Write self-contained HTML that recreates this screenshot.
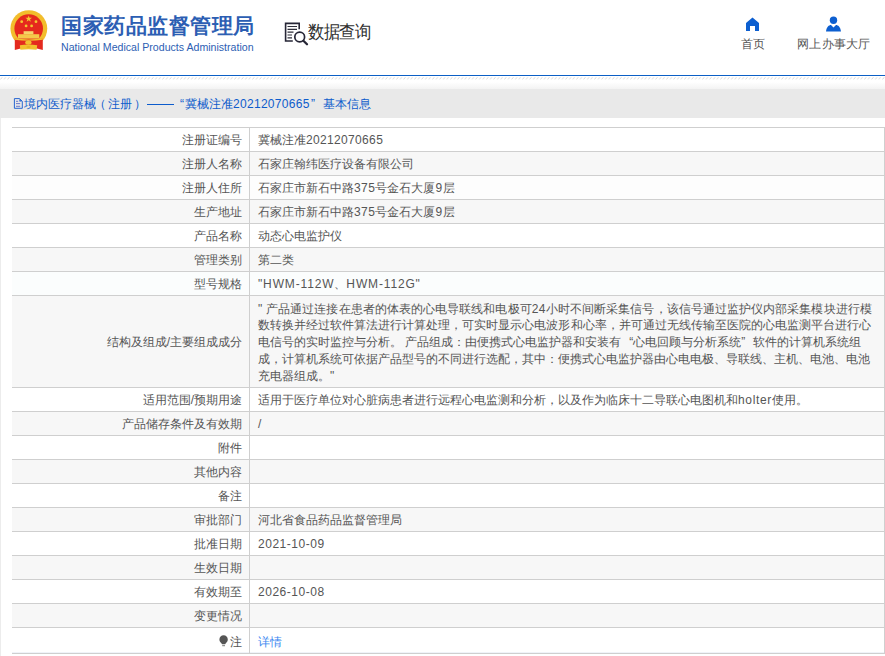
<!DOCTYPE html>
<html><head><meta charset="utf-8">
<style>
*{margin:0;padding:0;box-sizing:border-box}
html,body{width:885px;height:656px;overflow:hidden;background:#fff}
body{position:relative;font-family:"Liberation Sans",sans-serif;color:#555}
.abs{position:absolute;white-space:nowrap}
.title{left:61px;top:13px;font-size:21px;letter-spacing:0.55px;font-weight:bold;color:#2c5eb3;line-height:26px}
.sub{left:61px;top:40.7px;font-size:10.6px;color:#2c5eb3;line-height:13px}
.query{left:308px;top:19.6px;font-size:16.5px;letter-spacing:-1.3px;color:#2e2e2e;line-height:20px;transform:scaleY(1.1);transform-origin:0 0}
.navtxt{font-size:12.4px;letter-spacing:0.25px;color:#555;line-height:14px;top:37.4px}
.blue{left:0;top:75px;width:885px;height:1px;background:#0c5fc5}
.hatch{left:0;top:77px;width:885px;height:3px}
.grad{left:0;top:82px;width:885px;height:7px;background:linear-gradient(#fff,#f3f3f3)}
.bar{left:0;top:89px;width:885px;height:29px;background:#e9e9e9}
.bartxt{top:96px;font-size:12px;color:#0d5ccc;line-height:16px}
.leftline{left:0;top:118px;width:1px;height:538px;background:#ececec}
.row{position:absolute;left:12px;width:873px}
.hl{position:absolute;left:12px;width:873px;height:1px;background:#cfcfcf}
.vl{position:absolute;width:1px;background:#cfcfcf}
.lab{position:absolute;left:12px;width:230px;text-align:right;font-size:12px;line-height:24px;height:24px;white-space:nowrap;color:#555}
.val{position:absolute;left:258px;font-size:12px;line-height:24px;height:24px;white-space:nowrap;color:#555}
.link{color:#3a87f0}
.pin{vertical-align:-1px;margin-right:1px}
.ql,.qr{display:inline-block;width:12px}
.ql{text-align:right}
.qr{text-align:left}
.fw{display:inline-block;width:12px}
</style></head><body>
<svg class="abs" style="left:0;top:0" width="60" height="56" viewBox="0 0 60 56">
 <circle cx="28.85" cy="28.6" r="18.4" fill="#f2bd2c"/>
 <circle cx="28.7" cy="28.6" r="14.3" fill="#e5291d"/>
 <rect x="23.6" y="31.2" width="9.8" height="3.2" fill="#f6d46a"/>
 <rect x="18" y="34.2" width="21.3" height="4.4" fill="#f4c94a"/>
 <path d="M14.8 38.8 Q28.8 40.4 42.8 38.8 L42.8 50 L37 48.6 L20.6 48.6 L14.8 50 Z" fill="#e42a1e"/>
 <path d="M14.8 38.6 Q28.8 40.2 42.8 38.6 L42.8 39.8 Q28.8 41.6 14.8 39.8 Z" fill="#f2c02e"/>
 <ellipse cx="28.4" cy="42.6" rx="3.2" ry="2.2" fill="#f2c02e"/>
 <path d="M19.8 45.3 Q28.5 43.6 37.2 45.3 L36.6 49.8 Q28.5 48.6 20.4 49.8 Z" fill="#f2c02e"/>
 <ellipse cx="28.5" cy="47" rx="2.2" ry="1" fill="#e8b020"/>
 <polygon points="28.7,15.4 29.5,17.8 32,17.8 30,19.3 30.8,21.7 28.7,20.2 26.6,21.7 27.4,19.3 25.4,17.8 27.9,17.8" fill="#f4c630"/>
 <circle cx="21.7" cy="21.7" r="1.4" fill="#f4c630"/>
 <circle cx="36" cy="21.7" r="1.4" fill="#f4c630"/>
 <circle cx="26.1" cy="25.9" r="1.4" fill="#f4c630"/>
 <circle cx="31.6" cy="25.9" r="1.4" fill="#f4c630"/>
</svg>
<div class="abs title">国家药品监督管理局</div>
<div class="abs sub">National Medical Products Administration</div>
<svg class="abs" style="left:284px;top:22px" width="26" height="24" viewBox="0 0 26 24">
 <path d="M15.2 7.2 V1.4 H1.6 V19 H8.8" fill="none" stroke="#262636" stroke-width="1.6"/>
 <path d="M3.5 4.5h9.5M3.5 7.3h9.5M3.5 10.2h6M3.5 13h4.5M3.5 15.8h4.5" stroke="#2e2e3a" stroke-width="1.2"/>
 <circle cx="15.7" cy="15" r="4.9" fill="#fff" stroke="#262636" stroke-width="1.7"/>
 <path d="M19.4 18.8 L23 22.3" stroke="#262636" stroke-width="2.3" stroke-linecap="round"/>
</svg>
<div class="abs query">数据查询</div>
<svg class="abs" style="left:745px;top:17px" width="15" height="15" viewBox="0 0 15 15">
 <path d="M7.5 0.5 L14 6 V14 H10 V9 H5 V14 H1 V6 Z" fill="#0d5fd0"/>
</svg>
<div class="abs navtxt" style="left:740.8px">首页</div>
<svg class="abs" style="left:825px;top:16px" width="17" height="17" viewBox="0 0 17 17">
 <circle cx="8.5" cy="4.3" r="3.7" fill="#0d5fd0"/>
 <path d="M1 15.5 C1.5 11 4 9 6 9 L8.5 11.5 L11 9 C13 9 15.5 11 16 15.5 Z" fill="#0d5fd0"/>
</svg>
<div class="abs navtxt" style="left:797px">网上办事大厅</div>
<div class="abs blue"></div>
<svg class="abs hatch" width="885" height="3"><defs><pattern id="hp" width="3.6" height="3" patternUnits="userSpaceOnUse"><path d="M0.4 2.2 L2.3 0.3" stroke="#cdcdcd" stroke-width="0.9"/></pattern></defs><rect width="885" height="3" fill="url(#hp)"/></svg>
<div class="abs grad"></div>
<div class="abs bar"></div>
<svg class="abs" style="left:8px;top:94px" width="16" height="18" viewBox="8 94 16 18">
 <path d="M14.4 98.6 H19.6 L22.3 101.3 V108.3 H14.4 Z" fill="none" stroke="#1c5fd0" stroke-width="0.95"/>
 <path d="M19.4 98.9 V101.5 H22 Z" fill="#1c5fd0"/>
 <path d="M16 101.3h2.2M16 103.6h4.2M16 106.3h4.2" stroke="#5a6cc8" stroke-width="0.9"/>
</svg>
<div class="abs bartxt" style="left:23.8px">境内医疗器械</div>
<div class="abs bartxt" style="left:93.6px">（</div>
<div class="abs bartxt" style="left:107.5px;letter-spacing:0.3px">注册</div>
<div class="abs bartxt" style="left:134.3px">）</div>
<div class="abs" style="left:147px;top:104px;width:27px;height:1.4px;background:#0d5ccc"></div>
<div class="abs bartxt" style="left:180px">“</div>
<div class="abs bartxt" style="left:185px">冀械注准<span style="letter-spacing:0.3px">20212070665</span></div>
<div class="abs bartxt" style="left:311px">”</div>
<div class="abs bartxt" style="left:322.8px">基本信息</div>
<div class="abs leftline"></div>
<div class="row" style="top:127px;height:24px;background:#fff"></div>
<div class="hl" style="top:127px"></div>
<div class="lab" style="top:128.0px">注册证编号</div>
<div class="val" style="top:128.0px">冀械注准<span style="letter-spacing:0.34px">20212070665</span></div>
<div class="row" style="top:151px;height:24px;background:#f7f7f7"></div>
<div class="hl" style="top:151px"></div>
<div class="lab" style="top:152.0px">注册人名称</div>
<div class="val" style="top:152.0px">石家庄翰纬医疗设备有限公司</div>
<div class="row" style="top:175px;height:24px;background:#fdfdfd"></div>
<div class="hl" style="top:175px"></div>
<div class="lab" style="top:176.0px">注册人住所</div>
<div class="val" style="top:176.0px">石家庄市新石中路<span style="letter-spacing:0.45px">375</span>号金石大厦<span style="letter-spacing:0.45px">9</span>层</div>
<div class="row" style="top:199px;height:24px;background:#f7f7f7"></div>
<div class="hl" style="top:199px"></div>
<div class="lab" style="top:200.0px">生产地址</div>
<div class="val" style="top:200.0px">石家庄市新石中路<span style="letter-spacing:0.45px">375</span>号金石大厦<span style="letter-spacing:0.45px">9</span>层</div>
<div class="row" style="top:223px;height:24px;background:#fff"></div>
<div class="hl" style="top:223px"></div>
<div class="lab" style="top:224.0px">产品名称</div>
<div class="val" style="top:224.0px">动态心电监护仪</div>
<div class="row" style="top:247px;height:24px;background:#f7f7f7"></div>
<div class="hl" style="top:247px"></div>
<div class="lab" style="top:248.0px">管理类别</div>
<div class="val" style="top:248.0px">第二类</div>
<div class="row" style="top:271px;height:24px;background:#fbfdfd"></div>
<div class="hl" style="top:271px"></div>
<div class="lab" style="top:272.0px">型号规格</div>
<div class="val" style="top:272.0px"><span style="letter-spacing:0.85px">"HWM-112W</span>、<span style="letter-spacing:0.85px">HWM-112G"</span></div>
<div class="row" style="top:295px;height:92px;background:#f7f7f7"></div>
<div class="hl" style="top:295px"></div>
<div class="lab" style="top:330.0px">结构及组成/主要组成成分</div>
<div class="val" style="top:300.50px;line-height:17px;height:17px;letter-spacing:0.07px"><span style="letter-spacing:0.45px">"</span> 产品通过连接在患者的体表的心电导联线和电极可<span style="letter-spacing:0.45px">24</span>小时不间断采集信号，该信号通过监护仪内部采集模块进行模</div>
<div class="val" style="top:317.25px;line-height:17px;height:17px;letter-spacing:0.02px">数转换并经过软件算法进行计算处理，可实时显示心电波形和心率，并可通过无线传输至医院的心电监测平台进行心</div>
<div class="val" style="top:334.00px;line-height:17px;height:17px;letter-spacing:0.0px">电信号的实时监控与分析。 产品组成：由便携式心电监护器和安装有<span class="ql">“</span>心电回顾与分析系统<span class="qr">”</span>软件的计算机系统组</div>
<div class="val" style="top:350.75px;line-height:17px;height:17px;letter-spacing:0.0px">成，计算机系统可依据产品型号的不同进行选配，其中：便携式心电监护器由心电电极、导联线、主机、电池、电池</div>
<div class="val" style="top:367.50px;line-height:17px;height:17px;letter-spacing:0px">充电器组成。<span style="letter-spacing:0.45px">"</span></div>
<div class="row" style="top:387px;height:24px;background:#fff"></div>
<div class="hl" style="top:387px"></div>
<div class="lab" style="top:388.0px">适用范围/预期用途</div>
<div class="val" style="top:388.0px">适用于医疗单位对心脏病患者进行远程心电监测和分析，以及作为临床十二导联心电图机和<span style="letter-spacing:0.67px">holter</span>使用。</div>
<div class="row" style="top:411px;height:24px;background:#f7f7f7"></div>
<div class="hl" style="top:411px"></div>
<div class="lab" style="top:412.0px">产品储存条件及有效期</div>
<div class="val" style="top:412.0px">/</div>
<div class="row" style="top:435px;height:24px;background:#fff"></div>
<div class="hl" style="top:435px"></div>
<div class="lab" style="top:436.0px">附件</div>
<div class="row" style="top:459px;height:24px;background:#f7f7f7"></div>
<div class="hl" style="top:459px"></div>
<div class="lab" style="top:460.0px">其他内容</div>
<div class="row" style="top:483px;height:24px;background:#fff"></div>
<div class="hl" style="top:483px"></div>
<div class="lab" style="top:484.0px">备注</div>
<div class="row" style="top:507px;height:24px;background:#f7f7f7"></div>
<div class="hl" style="top:507px"></div>
<div class="lab" style="top:508.0px">审批部门</div>
<div class="val" style="top:508.0px">河北省食品药品监督管理局</div>
<div class="row" style="top:531px;height:24px;background:#fff"></div>
<div class="hl" style="top:531px"></div>
<div class="lab" style="top:532.0px">批准日期</div>
<div class="val" style="top:532.0px"><span style="letter-spacing:0.52px">2021-10-09</span></div>
<div class="row" style="top:555px;height:24px;background:#f7f7f7"></div>
<div class="hl" style="top:555px"></div>
<div class="lab" style="top:556.0px">生效日期</div>
<div class="row" style="top:579px;height:24px;background:#fff"></div>
<div class="hl" style="top:579px"></div>
<div class="lab" style="top:580.0px">有效期至</div>
<div class="val" style="top:580.0px"><span style="letter-spacing:0.52px">2026-10-08</span></div>
<div class="row" style="top:603px;height:24px;background:#f7f7f7"></div>
<div class="hl" style="top:603px"></div>
<div class="lab" style="top:604.0px">变更情况</div>
<div class="row" style="top:627px;height:26px;background:#fff"></div>
<div class="hl" style="top:627px"></div>
<div class="lab" style="top:629.5px"><svg class="pin" width="10" height="12" viewBox="0 0 10 12"><path d="M4.6 0.3C2.2 0.3 0.4 2.1 0.4 4.4c0 1.8 1.1 2.9 2 3.8l0.6 1h3.2l0.6-1c0.9-0.9 2-2 2-3.8C8.8 2.1 7 0.3 4.6 0.3z" fill="#555"/><rect x="3.2" y="10.2" width="2.8" height="1" fill="#777"/></svg>注</div>
<div class="val link" style="top:629.5px">详情</div>
<div class="hl" style="top:652px;background:#f0f3f9"></div>
<div class="hl" style="top:653px"></div>
<div class="vl" style="left:249px;top:127px;height:527px"></div>
<div class="vl" style="left:884px;top:127px;height:527px"></div>
</body></html>
